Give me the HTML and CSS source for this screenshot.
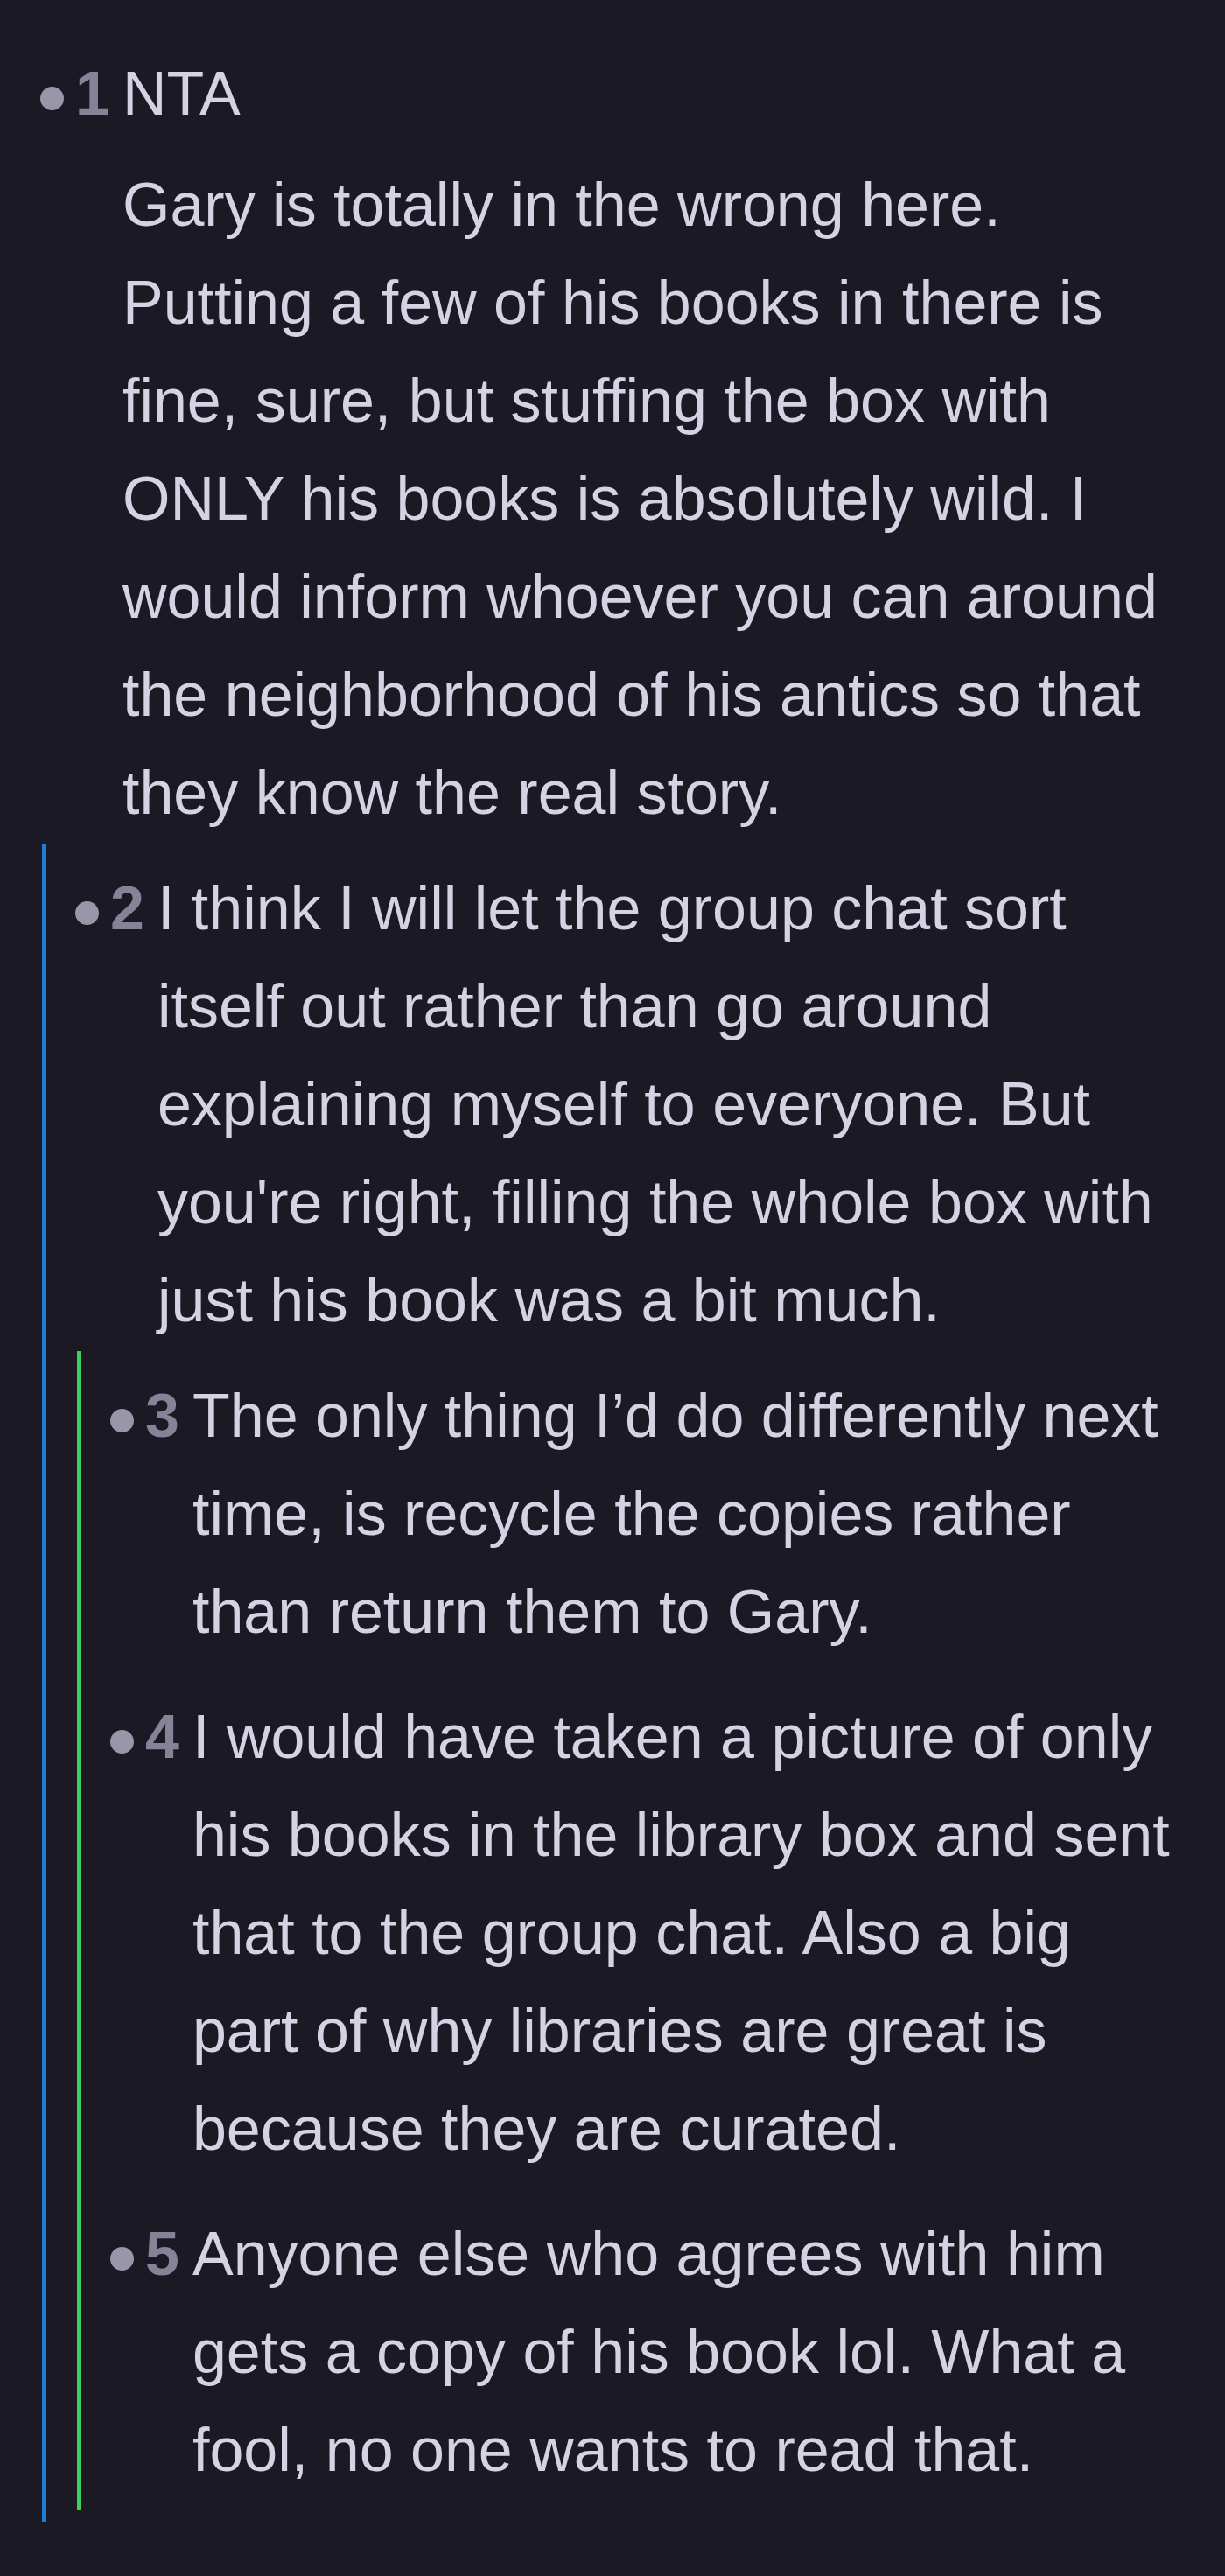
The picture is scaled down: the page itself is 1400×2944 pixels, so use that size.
FILE: index.html
```html
<!DOCTYPE html>
<html>

<head>
    <title>Thread</title>
    <link rel="stylesheet" href="styles.css">
</head>

<body>
    <div class="thread">
        <div class="comment">
            <div class="comment-row">
                <div class="marker"><span class="dot"></span><span class="num">1</span></div>
                <div class="comment-body">
                    <p>NTA</p>
                    <p>Gary is totally in the wrong here. Putting a few of his books in there is fine, sure, but stuffing the box with ONLY his books is absolutely wild. I would inform whoever you can around the neighborhood of his antics so that they know the real story.</p>
                </div>
            </div>
            <div class="replies depth-1">
                <div class="comment">
                    <div class="comment-row">
                        <div class="marker"><span class="dot"></span><span class="num">2</span></div>
                        <div class="comment-body">
                            <p>I think I will let the group chat sort itself out rather than go around explaining myself to everyone. But you're right, filling the whole box with just his book was a bit much.</p>
                        </div>
                    </div>
                    <div class="replies depth-2">
                        <div class="comment">
                            <div class="comment-row">
                                <div class="marker"><span class="dot"></span><span class="num">3</span></div>
                                <div class="comment-body">
                                    <p>The only thing I’d do differently next time, is recycle the copies rather than return them to Gary.</p>
                                </div>
                            </div>
                        </div>
                        <div class="comment">
                            <div class="comment-row">
                                <div class="marker"><span class="dot"></span><span class="num">4</span></div>
                                <div class="comment-body">
                                    <p>I would have taken a picture of only his books in the library box and sent that to the group chat. Also a big part of why libraries are great is because they are curated.</p>
                                </div>
                            </div>
                        </div>
                        <div class="comment">
                            <div class="comment-row">
                                <div class="marker"><span class="dot"></span><span class="num">5</span></div>
                                <div class="comment-body">
                                    <p>Anyone else who agrees with him gets a copy of his book lol. What a fool, no one wants to read that.</p>
                                </div>
                            </div>
                        </div>
                    </div>
                </div>
            </div>
        </div>
    </div>
</body>

</html>
```

FILE: styles.css
```css
html {
    background-color: #1b1a24;
}

body {
    margin: 0;
    padding: 0;
    background-color: #1b1a24;
    color: #d5d3e3;
    font-family: "Liberation Sans", Arial, sans-serif;
    font-size: 70px;
    line-height: 112px;
}

.thread {
    padding: 33px 56px 40px 46px;
}

.comment {
    padding: 18px 0 13px;
}

.comment-row {
    display: flex;
    align-items: flex-start;
}

.marker {
    flex: none;
    white-space: nowrap;
    margin-right: 15px;
}

.dot {
    display: inline-block;
    width: 27px;
    height: 27px;
    margin-right: 13px;
    border-radius: 50%;
    background: #9896a8;
    vertical-align: middle;
}

.num {
    font-weight: bold;
    color: #858397;
}

.comment-body {
    flex: 1;
    min-width: 0;
}

.comment-body p {
    margin: 0;
}

.comment-body p + p {
    margin-top: 15px;
}

.replies {
    margin: 2px 0 0 2px;
    padding-left: 34px;
    border-left: 4px solid transparent;
}

.replies.depth-1 {
    border-left-color: #1f7fd8;
}

.replies.depth-2 {
    border-left-color: #3ccf5b;
}
```
